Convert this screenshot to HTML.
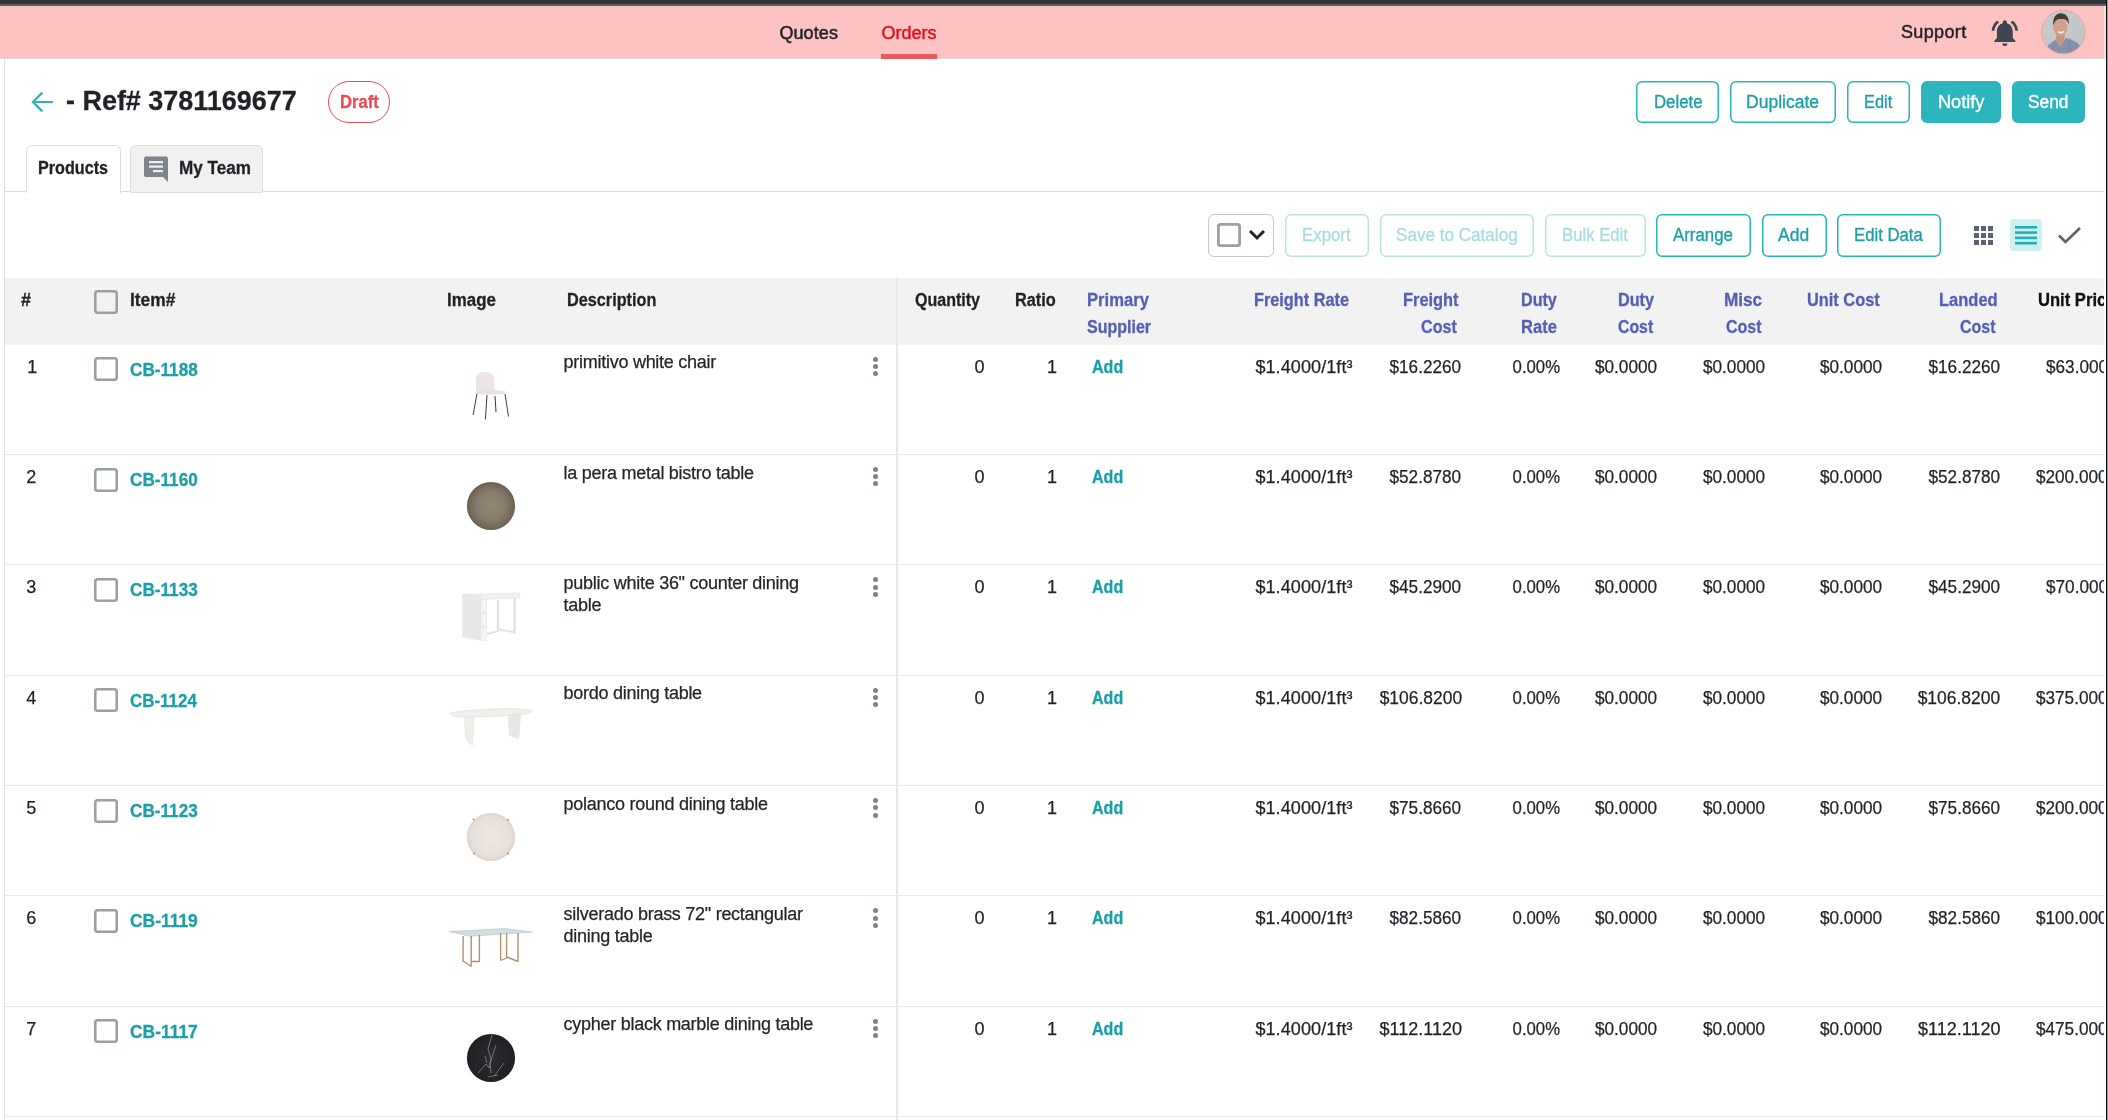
<!DOCTYPE html>
<html><head><meta charset="utf-8"><style>
html,body{margin:0;padding:0;width:2108px;height:1120px;overflow:hidden;background:#fff;}
body{position:relative;font-family:"Liberation Sans", sans-serif;}
#root{position:absolute;left:0;top:0;width:2108px;height:1120px;will-change:transform;background:#fff;}
#root>div{position:absolute;box-sizing:content-box;}
body>div{position:absolute;box-sizing:content-box;}
.t{white-space:nowrap;line-height:normal;-webkit-font-smoothing:antialiased;}
#clip{position:absolute;left:0;top:0;width:2104px;height:1120px;overflow:hidden;}
</style></head><body>
<div id="root">
<div style="left:0px;top:0px;width:2108px;height:4px;background:#333438"></div>
<div style="left:0px;top:4px;width:2108px;height:2px;background:#5c6064"></div>
<div style="left:0px;top:6px;width:2108px;height:52px;background:#fdc3c3"></div>
<div style="left:0px;top:58px;width:2108px;height:1px;background:#dcd8d8"></div>
<div class="t" style="top:23.11px;font-size:18px;font-weight:400;color:#1f2328;left:779.4px;-webkit-text-stroke:0.5px currentColor;letter-spacing:0.1px;">Quotes</div>
<div class="t" style="top:23.11px;font-size:18px;font-weight:400;color:#e0121c;left:881.4px;-webkit-text-stroke:0.45px currentColor;">Orders</div>
<div style="left:881px;top:54px;width:56px;height:5px;background:#e85a5a"></div>
<div class="t" style="top:22.21px;font-size:18px;font-weight:400;color:#1f2328;left:1901px;-webkit-text-stroke:0.5px currentColor;letter-spacing:0.35px;">Support</div>
<svg style="position:absolute;left:1988.6px;top:17px;" width="32" height="32" viewBox="0 0 32 32"><g transform="scale(1.32)"><path fill="#3d4550" d="M7.58 4.08L6.15 2.65C3.75 4.48 2.17 7.3 2.03 10.5h2c.15-2.65 1.51-4.97 3.55-6.42zm12.39 6.42h2c-.15-3.2-1.73-6.02-4.12-7.85l-1.42 1.43c2.02 1.45 3.39 3.770 3.54 6.42zM18 11c0-3.07-1.64-5.640-4.5-6.32V4c0-.83-.67-1.5-1.5-1.5s-1.5.67-1.5 1.5v.68C7.63 5.36 6 7.92 6 11v5l-2 2v1h16v-1l-2-2v-5zm-6 11c.14 0 .27-.01.4-.04.65-.14 1.18-.58 1.44-1.18.1-.24.15-.5.15-.78h-4c.01 1.1.9 2 2.01 2z"/></g></svg>
<svg style="position:absolute;left:2041px;top:9px;" width="46" height="46" viewBox="0 0 46 46"><defs><clipPath id="av"><circle cx="22.5" cy="23.1" r="21.6"/></clipPath>
<linearGradient id="avbg" x1="0" y1="0" x2="1" y2="1"><stop offset="0" stop-color="#c8cccc"/><stop offset="1" stop-color="#bfc4c4"/></linearGradient></defs>
<g clip-path="url(#av)"><rect width="46" height="46" fill="url(#avbg)"/>
<path d="M2 48L6 38C9 34 13 31.5 15 30.5l4.5 7 5-8.5c6 1 12 4 15.5 8.5L44 48z" fill="#8693ab"/>
<path d="M4 44l4-8M10 46l3-12M30 46l-2-15M36 46l-1-12" stroke="#6f7a90" stroke-width=".8" opacity=".6"/>
<path d="M15 24.5h9l-.6 7-3.9 6-4.2-6z" fill="#c99682"/>
<ellipse cx="19.3" cy="18.3" rx="6.9" ry="8.6" fill="#d49f8b"/>
<path d="M12.2 17C11.5 9 14.5 4.2 19.8 4.2s8.6 4 8 11.5c-.8-3.6-3-5.6-7.8-5.6s-6.6 2.3-7.8 6.9z" fill="#4c3b2f"/>
<path d="M17 22.6q2.8 2.4 5.8-.2" stroke="#f2f2f2" stroke-width="1.5" fill="none"/>
</g><circle cx="22.5" cy="23.1" r="21.8" fill="none" stroke="#eaa4a4" stroke-width="1"/></svg>
<div style="left:2104px;top:6px;width:2px;height:52px;background:#ffdada"></div>
<div style="left:2106px;top:0px;width:1px;height:1120px;background:#0c0c0c"></div>
<div style="left:2107px;top:0px;width:1px;height:1120px;background:#7ab070"></div>
<div style="left:4px;top:58px;width:1px;height:1062px;background:#e0e1e3"></div>
<svg style="position:absolute;left:29px;top:89px;" width="27" height="26" viewBox="0 0 27 26"><path d="M13.3 3.6L3.9 13l9.4 9.4M4.4 13H23.9" stroke="#2bb3ba" stroke-width="2.2" fill="none" stroke-linecap="butt"/></svg>
<div class="t" style="top:85.56px;font-size:27px;font-weight:700;color:#1f2328;left:65.90px;-webkit-text-stroke:0.3px currentColor;transform:scaleX(0.9978);transform-origin:left center;">- Ref# 3781169677</div>
<div style="left:328px;top:81px;width:60px;height:40px;border:1px solid #e65055;border-radius:21px"></div>
<div class="t" style="top:91.51px;font-size:18px;font-weight:700;color:#e84c52;left:340.00px;-webkit-text-stroke:0.3px currentColor;transform:scaleX(0.9220);transform-origin:left center;">Draft</div>
<div style="left:1636px;top:81px;width:83px;height:42px;box-shadow:inset 0 0 0 1.5px #2bb3ba;border-radius:6px"></div>
<div class="t" style="top:91.71px;font-size:18px;font-weight:400;color:#1d9fa7;left:1653.90px;-webkit-text-stroke:0.35px currentColor;transform:scaleX(0.9314);transform-origin:left center;">Delete</div>
<div style="left:1730px;top:81px;width:106px;height:42px;box-shadow:inset 0 0 0 1.5px #2bb3ba;border-radius:6px"></div>
<div class="t" style="top:91.71px;font-size:18px;font-weight:400;color:#1d9fa7;left:1746.40px;-webkit-text-stroke:0.35px currentColor;transform:scaleX(0.9730);transform-origin:left center;">Duplicate</div>
<div style="left:1847px;top:81px;width:63px;height:42px;box-shadow:inset 0 0 0 1.5px #2bb3ba;border-radius:6px"></div>
<div class="t" style="top:91.71px;font-size:18px;font-weight:400;color:#1d9fa7;left:1864.20px;-webkit-text-stroke:0.35px currentColor;transform:scaleX(0.9097);transform-origin:left center;">Edit</div>
<div style="left:1921px;top:81px;width:80px;height:42px;background:#2db5bd;border-radius:6px"></div>
<div class="t" style="top:91.71px;font-size:18px;font-weight:400;color:#ffffff;left:1938.00px;-webkit-text-stroke:0.35px currentColor;transform:scaleX(1.0089);transform-origin:left center;">Notify</div>
<div style="left:2012px;top:81px;width:73px;height:42px;background:#2db5bd;border-radius:6px"></div>
<div class="t" style="top:91.71px;font-size:18px;font-weight:400;color:#ffffff;left:2028.10px;-webkit-text-stroke:0.35px currentColor;transform:scaleX(0.9625);transform-origin:left center;">Send</div>
<div style="left:4px;top:191px;width:2100px;height:1px;background:#dcdcdc"></div>
<div style="left:26px;top:145px;width:93px;height:47px;background:#fff;border:1px solid #dedede;border-bottom:none;border-radius:6px 6px 0 0"></div>
<div class="t" style="top:157.91px;font-size:18px;font-weight:700;color:#1f2328;left:37.80px;-webkit-text-stroke:0.3px currentColor;transform:scaleX(0.8974);transform-origin:left center;">Products</div>
<div style="left:130px;top:145px;width:131px;height:46px;background:#f1f1f1;border:1px solid #dedede;border-radius:6px 6px 0 0"></div>
<svg style="position:absolute;left:143px;top:155px;" width="27" height="27" viewBox="0 0 27 27"><path d="M3 1.5h20a2 2 0 0 1 2 2v23.5l-5-5H3a2 2 0 0 1-2-2V3.5a2 2 0 0 1 2-2z" fill="#7d848c"/><rect x="6" y="6" width="14" height="2.2" fill="#f1f1f1"/><rect x="6" y="10.5" width="14" height="2.2" fill="#f1f1f1"/><rect x="10" y="15" width="10" height="2.2" fill="#f1f1f1"/></svg>
<div class="t" style="top:157.91px;font-size:18px;font-weight:700;color:#1f2328;left:179.00px;-webkit-text-stroke:0.3px currentColor;transform:scaleX(0.9514);transform-origin:left center;">My Team</div>
<div style="left:1208px;top:214px;width:64px;height:41px;border:1.5px solid #c8c8cc;border-radius:6px"></div>
<div style="left:1217px;top:223px;width:24px;height:24px;box-shadow:inset 0 0 0 2.8px #9aa0a6;border-radius:3.5px"></div>
<svg style="position:absolute;left:1247px;top:228px;" width="20" height="14" viewBox="0 0 20 14"><path d="M3 3l7 7 7-7" stroke="#222" stroke-width="3" fill="none"/></svg>
<div style="left:1285px;top:214px;width:84px;height:43px;box-shadow:inset 0 0 0 1.5px #b8e4e7;border-radius:6px"></div>
<div class="t" style="top:224.71px;font-size:18px;font-weight:400;color:#a9dde1;left:1302.20px;-webkit-text-stroke:0.35px currentColor;transform:scaleX(0.9346);transform-origin:left center;">Export</div>
<div style="left:1380px;top:214px;width:154px;height:43px;box-shadow:inset 0 0 0 1.5px #b8e4e7;border-radius:6px"></div>
<div class="t" style="top:224.71px;font-size:18px;font-weight:400;color:#a9dde1;left:1396.20px;-webkit-text-stroke:0.35px currentColor;transform:scaleX(0.9500);transform-origin:left center;">Save to Catalog</div>
<div style="left:1545px;top:214px;width:101px;height:43px;box-shadow:inset 0 0 0 1.5px #b8e4e7;border-radius:6px"></div>
<div class="t" style="top:224.71px;font-size:18px;font-weight:400;color:#a9dde1;left:1562.00px;-webkit-text-stroke:0.35px currentColor;transform:scaleX(0.9282);transform-origin:left center;">Bulk Edit</div>
<div style="left:1656px;top:214px;width:95px;height:43px;box-shadow:inset 0 0 0 1.5px #2bb3ba;border-radius:6px"></div>
<div class="t" style="top:224.71px;font-size:18px;font-weight:400;color:#1d9fa7;left:1673.20px;-webkit-text-stroke:0.35px currentColor;transform:scaleX(0.9344);transform-origin:left center;">Arrange</div>
<div style="left:1762px;top:214px;width:65px;height:43px;box-shadow:inset 0 0 0 1.5px #2bb3ba;border-radius:6px"></div>
<div class="t" style="top:224.71px;font-size:18px;font-weight:400;color:#1d9fa7;left:1778.30px;-webkit-text-stroke:0.35px currentColor;transform:scaleX(0.9710);transform-origin:left center;">Add</div>
<div style="left:1837px;top:214px;width:104px;height:43px;box-shadow:inset 0 0 0 1.5px #2bb3ba;border-radius:6px"></div>
<div class="t" style="top:224.71px;font-size:18px;font-weight:400;color:#1d9fa7;left:1853.80px;-webkit-text-stroke:0.35px currentColor;transform:scaleX(0.9284);transform-origin:left center;">Edit Data</div>
<svg style="position:absolute;left:1974px;top:226px;" width="19" height="19" viewBox="0 0 19 19"><rect x="0" y="0" width="5" height="5" fill="#5b6370"/><rect x="7" y="0" width="5" height="5" fill="#5b6370"/><rect x="14" y="0" width="5" height="5" fill="#5b6370"/><rect x="0" y="7" width="5" height="5" fill="#5b6370"/><rect x="7" y="7" width="5" height="5" fill="#5b6370"/><rect x="14" y="7" width="5" height="5" fill="#5b6370"/><rect x="0" y="14" width="5" height="5" fill="#5b6370"/><rect x="7" y="14" width="5" height="5" fill="#5b6370"/><rect x="14" y="14" width="5" height="5" fill="#5b6370"/></svg>
<div style="left:2010px;top:219px;width:32px;height:32px;background:#cdf0f0;border-radius:4px"></div>
<svg style="position:absolute;left:2015px;top:226px;" width="22" height="19" viewBox="0 0 22 19"><rect x="0" y="0.0" width="22" height="2.6" fill="#22aeb5"/><rect x="0" y="5.3" width="22" height="2.6" fill="#22aeb5"/><rect x="0" y="10.6" width="22" height="2.6" fill="#22aeb5"/><rect x="0" y="15.9" width="22" height="2.6" fill="#22aeb5"/></svg>
<svg style="position:absolute;left:2057px;top:226px;" width="25" height="20" viewBox="0 0 25 20"><path d="M2 9.5l6.5 6.5L23 2" stroke="#5b6370" stroke-width="2.6" fill="none"/></svg>
<div style="left:5px;top:278px;width:2099px;height:67px;background:#f2f2f2"></div>
<div style="left:896px;top:278px;width:2px;height:842px;background:#e6e7e8"></div>
<div class="t" style="top:289.71px;font-size:18px;font-weight:700;color:#1f2328;left:21px;-webkit-text-stroke:0.3px currentColor;">#</div>
<div style="left:94px;top:290px;width:24px;height:24px;box-shadow:inset 0 0 0 2.6px #9aa0a6;border-radius:3.5px"></div>
<div class="t" style="top:289.71px;font-size:18px;font-weight:700;color:#1f2328;left:130.00px;-webkit-text-stroke:0.3px currentColor;transform:scaleX(0.9652);transform-origin:left center;">Item#</div>
<div class="t" style="top:289.71px;font-size:18px;font-weight:700;color:#1f2328;left:447.20px;-webkit-text-stroke:0.3px currentColor;transform:scaleX(0.9412);transform-origin:left center;">Image</div>
<div class="t" style="top:289.71px;font-size:18px;font-weight:700;color:#1f2328;left:567.00px;-webkit-text-stroke:0.3px currentColor;transform:scaleX(0.9020);transform-origin:left center;">Description</div>
<div class="t" style="top:289.71px;font-size:18px;font-weight:700;color:#1f2328;left:914.80px;-webkit-text-stroke:0.3px currentColor;transform:scaleX(0.8904);transform-origin:left center;">Quantity</div>
<div class="t" style="top:289.71px;font-size:18px;font-weight:700;color:#1f2328;left:1014.70px;-webkit-text-stroke:0.3px currentColor;transform:scaleX(0.9068);transform-origin:left center;">Ratio</div>
<div class="t" style="top:289.71px;font-size:18px;font-weight:700;color:#5560b3;left:1086.90px;-webkit-text-stroke:0.3px currentColor;transform:scaleX(0.9242);transform-origin:left center;">Primary</div>
<div class="t" style="top:316.71px;font-size:18px;font-weight:700;color:#5560b3;left:1086.90px;-webkit-text-stroke:0.3px currentColor;transform:scaleX(0.8903);transform-origin:left center;">Supplier</div>
<div class="t" style="top:289.71px;font-size:18px;font-weight:700;color:#5560b3;left:1253.80px;-webkit-text-stroke:0.3px currentColor;transform:scaleX(0.9048);transform-origin:left center;">Freight Rate</div>
<div class="t" style="top:289.71px;font-size:18px;font-weight:700;color:#5560b3;left:1402.60px;-webkit-text-stroke:0.3px currentColor;transform:scaleX(0.9100);transform-origin:left center;">Freight</div>
<div class="t" style="top:316.71px;font-size:18px;font-weight:700;color:#5560b3;left:1421.40px;-webkit-text-stroke:0.3px currentColor;transform:scaleX(0.8950);transform-origin:left center;">Cost</div>
<div class="t" style="top:289.71px;font-size:18px;font-weight:700;color:#5560b3;left:1521.00px;-webkit-text-stroke:0.3px currentColor;transform:scaleX(0.8949);transform-origin:left center;">Duty</div>
<div class="t" style="top:316.71px;font-size:18px;font-weight:700;color:#5560b3;left:1521.00px;-webkit-text-stroke:0.3px currentColor;transform:scaleX(0.9184);transform-origin:left center;">Rate</div>
<div class="t" style="top:289.71px;font-size:18px;font-weight:700;color:#5560b3;left:1618.20px;-webkit-text-stroke:0.3px currentColor;transform:scaleX(0.9000);transform-origin:left center;">Duty</div>
<div class="t" style="top:316.71px;font-size:18px;font-weight:700;color:#5560b3;left:1618.20px;-webkit-text-stroke:0.3px currentColor;transform:scaleX(0.8800);transform-origin:left center;">Cost</div>
<div class="t" style="top:289.71px;font-size:18px;font-weight:700;color:#5560b3;left:1724.20px;-webkit-text-stroke:0.3px currentColor;transform:scaleX(0.9538);transform-origin:left center;">Misc</div>
<div class="t" style="top:316.71px;font-size:18px;font-weight:700;color:#5560b3;left:1725.90px;-webkit-text-stroke:0.3px currentColor;transform:scaleX(0.8875);transform-origin:left center;">Cost</div>
<div class="t" style="top:289.71px;font-size:18px;font-weight:700;color:#5560b3;left:1806.90px;-webkit-text-stroke:0.3px currentColor;transform:scaleX(0.9089);transform-origin:left center;">Unit Cost</div>
<div class="t" style="top:289.71px;font-size:18px;font-weight:700;color:#5560b3;left:1938.90px;-webkit-text-stroke:0.3px currentColor;transform:scaleX(0.9161);transform-origin:left center;">Landed</div>
<div class="t" style="top:316.71px;font-size:18px;font-weight:700;color:#5560b3;left:1960.20px;-webkit-text-stroke:0.3px currentColor;transform:scaleX(0.8875);transform-origin:left center;">Cost</div>
<div class="t" style="top:289.71px;font-size:18px;font-weight:700;color:#111;left:2037.90px;-webkit-text-stroke:0.3px currentColor;transform:scaleX(0.9217);transform-origin:left center;">Unit Price</div>
<div style="left:5px;top:454px;width:2099px;height:1px;background:#e9eaeb"></div>
<div class="t" style="top:356.51px;font-size:18px;font-weight:400;color:#1f2328;left:27.2px;-webkit-text-stroke:0.25px currentColor;">1</div>
<div style="left:94px;top:357px;width:24px;height:24px;box-shadow:inset 0 0 0 2.6px #9aa0a6;border-radius:3.5px"></div>
<div class="t" style="top:359.71px;font-size:18px;font-weight:700;color:#1d9fa7;left:130.00px;-webkit-text-stroke:0.3px currentColor;transform:scaleX(0.9535);transform-origin:left center;">CB-1188</div>
<div class="t" style="top:352.31px;font-size:18px;font-weight:400;color:#23272b;letter-spacing:-0.27px;left:563.6px;-webkit-text-stroke:0.25px currentColor;">primitivo white chair</div>
<div style="left:873px;top:356.7px;width:5px;height:5px;background:#7c838d;border-radius:50%"></div>
<div style="left:873px;top:363.9px;width:5px;height:5px;background:#7c838d;border-radius:50%"></div>
<div style="left:873px;top:371.1px;width:5px;height:5px;background:#7c838d;border-radius:50%"></div>
<div class="t" style="top:356.51px;font-size:18px;font-weight:400;color:#1f2328;right:1123.5px;text-align:right;-webkit-text-stroke:0.25px currentColor;">0</div>
<div class="t" style="top:356.51px;font-size:18px;font-weight:400;color:#1f2328;right:1051px;text-align:right;-webkit-text-stroke:0.25px currentColor;">1</div>
<div class="t" style="top:356.51px;font-size:18px;font-weight:700;color:#1d9fa7;left:1092.20px;-webkit-text-stroke:0.3px currentColor;transform:scaleX(0.8912);transform-origin:left center;">Add</div>
<div class="t" style="top:356.51px;font-size:18px;font-weight:400;color:#1f2328;letter-spacing:0.1px;left:1255.4px;-webkit-text-stroke:0.25px currentColor;">$1.4000/1ft³</div>
<div class="t" style="top:356.51px;font-size:18px;font-weight:400;color:#1f2328;right:646.5px;text-align:right;-webkit-text-stroke:0.25px currentColor;transform:scaleX(0.9533);transform-origin:right center;">$16.2260</div>
<div class="t" style="top:356.51px;font-size:18px;font-weight:400;color:#1f2328;right:548.4000000000001px;text-align:right;-webkit-text-stroke:0.25px currentColor;transform:scaleX(0.9294);transform-origin:right center;">0.00%</div>
<div class="t" style="top:356.51px;font-size:18px;font-weight:400;color:#1f2328;right:451.0px;text-align:right;-webkit-text-stroke:0.25px currentColor;transform:scaleX(0.9538);transform-origin:right center;">$0.0000</div>
<div class="t" style="top:356.51px;font-size:18px;font-weight:400;color:#1f2328;right:343.0px;text-align:right;-webkit-text-stroke:0.25px currentColor;transform:scaleX(0.9538);transform-origin:right center;">$0.0000</div>
<div class="t" style="top:356.51px;font-size:18px;font-weight:400;color:#1f2328;right:226.0px;text-align:right;-webkit-text-stroke:0.25px currentColor;transform:scaleX(0.9538);transform-origin:right center;">$0.0000</div>
<div class="t" style="top:356.51px;font-size:18px;font-weight:400;color:#1f2328;right:108.0px;text-align:right;-webkit-text-stroke:0.25px currentColor;transform:scaleX(0.9533);transform-origin:right center;">$16.2260</div>
<div class="t" style="top:356.51px;font-size:18px;font-weight:400;color:#1f2328;left:2046px;-webkit-text-stroke:0.25px currentColor;transform:scaleX(0.9533);transform-origin:left center;">$63.0000</div>
<svg style="position:absolute;left:468px;top:368px;" width="44" height="56" viewBox="0 0 44 56"><path d="M7.9 25.5V12.5C7.9 6 11.5 3.9 17 3.9s9.4 2.1 9.4 8.6V25z" fill="#ebe5e5"/>
<path d="M8 22.5c6-.8 14-.8 21-.3 4 .3 8 .6 8 1.3 0 1.5-1.5 2.6-3 2.8-8 .6-18 .4-26-.3z" fill="#e8e3e1"/>
<path d="M8.9 26L5.1 47M19 27l-1.6 24.4M27 28l1 16M37 26l3.5 22.5" stroke="#3a3a3a" stroke-width="1" fill="none"/></svg>
<div style="left:5px;top:564px;width:2099px;height:1px;background:#e9eaeb"></div>
<div class="t" style="top:466.86px;font-size:18px;font-weight:400;color:#1f2328;left:26.3px;-webkit-text-stroke:0.25px currentColor;">2</div>
<div style="left:94px;top:468px;width:24px;height:24px;box-shadow:inset 0 0 0 2.6px #9aa0a6;border-radius:3.5px"></div>
<div class="t" style="top:470.06px;font-size:18px;font-weight:700;color:#1d9fa7;left:130.00px;-webkit-text-stroke:0.3px currentColor;transform:scaleX(0.9535);transform-origin:left center;">CB-1160</div>
<div class="t" style="top:462.66px;font-size:18px;font-weight:400;color:#23272b;letter-spacing:-0.27px;left:563.6px;-webkit-text-stroke:0.25px currentColor;">la pera metal bistro table</div>
<div style="left:873px;top:467.05px;width:5px;height:5px;background:#7c838d;border-radius:50%"></div>
<div style="left:873px;top:474.25px;width:5px;height:5px;background:#7c838d;border-radius:50%"></div>
<div style="left:873px;top:481.45000000000005px;width:5px;height:5px;background:#7c838d;border-radius:50%"></div>
<div class="t" style="top:466.86px;font-size:18px;font-weight:400;color:#1f2328;right:1123.5px;text-align:right;-webkit-text-stroke:0.25px currentColor;">0</div>
<div class="t" style="top:466.86px;font-size:18px;font-weight:400;color:#1f2328;right:1051px;text-align:right;-webkit-text-stroke:0.25px currentColor;">1</div>
<div class="t" style="top:466.86px;font-size:18px;font-weight:700;color:#1d9fa7;left:1092.20px;-webkit-text-stroke:0.3px currentColor;transform:scaleX(0.8912);transform-origin:left center;">Add</div>
<div class="t" style="top:466.86px;font-size:18px;font-weight:400;color:#1f2328;letter-spacing:0.1px;left:1255.4px;-webkit-text-stroke:0.25px currentColor;">$1.4000/1ft³</div>
<div class="t" style="top:466.86px;font-size:18px;font-weight:400;color:#1f2328;right:646.5px;text-align:right;-webkit-text-stroke:0.25px currentColor;transform:scaleX(0.9533);transform-origin:right center;">$52.8780</div>
<div class="t" style="top:466.86px;font-size:18px;font-weight:400;color:#1f2328;right:548.4000000000001px;text-align:right;-webkit-text-stroke:0.25px currentColor;transform:scaleX(0.9294);transform-origin:right center;">0.00%</div>
<div class="t" style="top:466.86px;font-size:18px;font-weight:400;color:#1f2328;right:451.0px;text-align:right;-webkit-text-stroke:0.25px currentColor;transform:scaleX(0.9538);transform-origin:right center;">$0.0000</div>
<div class="t" style="top:466.86px;font-size:18px;font-weight:400;color:#1f2328;right:343.0px;text-align:right;-webkit-text-stroke:0.25px currentColor;transform:scaleX(0.9538);transform-origin:right center;">$0.0000</div>
<div class="t" style="top:466.86px;font-size:18px;font-weight:400;color:#1f2328;right:226.0px;text-align:right;-webkit-text-stroke:0.25px currentColor;transform:scaleX(0.9538);transform-origin:right center;">$0.0000</div>
<div class="t" style="top:466.86px;font-size:18px;font-weight:400;color:#1f2328;right:108.0px;text-align:right;-webkit-text-stroke:0.25px currentColor;transform:scaleX(0.9533);transform-origin:right center;">$52.8780</div>
<div class="t" style="top:466.86px;font-size:18px;font-weight:400;color:#1f2328;left:2035.5px;-webkit-text-stroke:0.25px currentColor;transform:scaleX(0.9529);transform-origin:left center;">$200.0000</div>
<svg style="position:absolute;left:466px;top:481px;" width="50" height="50" viewBox="0 0 50 50"><defs><radialGradient id="brz" cx=".5" cy=".5" r=".5"><stop offset="0" stop-color="#938877"/><stop offset=".6" stop-color="#877b6b"/><stop offset="1" stop-color="#6a6051"/></radialGradient></defs><circle cx="25" cy="25" r="24.1" fill="url(#brz)"/></svg>
<div style="left:5px;top:675px;width:2099px;height:1px;background:#e9eaeb"></div>
<div class="t" style="top:577.21px;font-size:18px;font-weight:400;color:#1f2328;left:26.3px;-webkit-text-stroke:0.25px currentColor;">3</div>
<div style="left:94px;top:578px;width:24px;height:24px;box-shadow:inset 0 0 0 2.6px #9aa0a6;border-radius:3.5px"></div>
<div class="t" style="top:580.41px;font-size:18px;font-weight:700;color:#1d9fa7;left:130.00px;-webkit-text-stroke:0.3px currentColor;transform:scaleX(0.9535);transform-origin:left center;">CB-1133</div>
<div class="t" style="top:573.01px;font-size:18px;font-weight:400;color:#23272b;letter-spacing:-0.27px;left:563.6px;-webkit-text-stroke:0.25px currentColor;">public white 36" counter dining</div>
<div class="t" style="top:594.81px;font-size:18px;font-weight:400;color:#23272b;letter-spacing:-0.27px;left:563.6px;-webkit-text-stroke:0.25px currentColor;">table</div>
<div style="left:873px;top:577.4000000000001px;width:5px;height:5px;background:#7c838d;border-radius:50%"></div>
<div style="left:873px;top:584.6px;width:5px;height:5px;background:#7c838d;border-radius:50%"></div>
<div style="left:873px;top:591.8000000000001px;width:5px;height:5px;background:#7c838d;border-radius:50%"></div>
<div class="t" style="top:577.21px;font-size:18px;font-weight:400;color:#1f2328;right:1123.5px;text-align:right;-webkit-text-stroke:0.25px currentColor;">0</div>
<div class="t" style="top:577.21px;font-size:18px;font-weight:400;color:#1f2328;right:1051px;text-align:right;-webkit-text-stroke:0.25px currentColor;">1</div>
<div class="t" style="top:577.21px;font-size:18px;font-weight:700;color:#1d9fa7;left:1092.20px;-webkit-text-stroke:0.3px currentColor;transform:scaleX(0.8912);transform-origin:left center;">Add</div>
<div class="t" style="top:577.21px;font-size:18px;font-weight:400;color:#1f2328;letter-spacing:0.1px;left:1255.4px;-webkit-text-stroke:0.25px currentColor;">$1.4000/1ft³</div>
<div class="t" style="top:577.21px;font-size:18px;font-weight:400;color:#1f2328;right:646.5px;text-align:right;-webkit-text-stroke:0.25px currentColor;transform:scaleX(0.9533);transform-origin:right center;">$45.2900</div>
<div class="t" style="top:577.21px;font-size:18px;font-weight:400;color:#1f2328;right:548.4000000000001px;text-align:right;-webkit-text-stroke:0.25px currentColor;transform:scaleX(0.9294);transform-origin:right center;">0.00%</div>
<div class="t" style="top:577.21px;font-size:18px;font-weight:400;color:#1f2328;right:451.0px;text-align:right;-webkit-text-stroke:0.25px currentColor;transform:scaleX(0.9538);transform-origin:right center;">$0.0000</div>
<div class="t" style="top:577.21px;font-size:18px;font-weight:400;color:#1f2328;right:343.0px;text-align:right;-webkit-text-stroke:0.25px currentColor;transform:scaleX(0.9538);transform-origin:right center;">$0.0000</div>
<div class="t" style="top:577.21px;font-size:18px;font-weight:400;color:#1f2328;right:226.0px;text-align:right;-webkit-text-stroke:0.25px currentColor;transform:scaleX(0.9538);transform-origin:right center;">$0.0000</div>
<div class="t" style="top:577.21px;font-size:18px;font-weight:400;color:#1f2328;right:108.0px;text-align:right;-webkit-text-stroke:0.25px currentColor;transform:scaleX(0.9533);transform-origin:right center;">$45.2900</div>
<div class="t" style="top:577.21px;font-size:18px;font-weight:400;color:#1f2328;left:2046px;-webkit-text-stroke:0.25px currentColor;transform:scaleX(0.9533);transform-origin:left center;">$70.0000</div>
<svg style="position:absolute;left:460px;top:590px;" width="64" height="54" viewBox="0 0 64 54"><path d="M2.2 4.4L21.2 5v45.7L2.2 47.2z" fill="#e8e8e8"/>
<path d="M2.2 4.4L59.8 3v4.9L21.2 9.5V5z" fill="#f1f1f1" stroke="#e2e2e2" stroke-width=".6"/>
<rect x="21.2" y="9.5" width="5.6" height="41.2" fill="#f4f4f4" stroke="#e4e4e4" stroke-width=".5"/>
<path d="M21.2 22.9h5.6M21.2 36.8h5.6" stroke="#e0e0e0" stroke-width="1"/>
<rect x="36.8" y="10" width="2.4" height="29.5" fill="#e2e2e2"/><rect x="53.4" y="8" width="2.4" height="35.5" fill="#e2e2e2"/>
<path d="M26.8 44.3L39.2 40.6M39.2 39.5L55.8 42.5" stroke="#e2e2e2" stroke-width="2" fill="none"/></svg>
<div style="left:5px;top:785px;width:2099px;height:1px;background:#e9eaeb"></div>
<div class="t" style="top:687.56px;font-size:18px;font-weight:400;color:#1f2328;left:26.3px;-webkit-text-stroke:0.25px currentColor;">4</div>
<div style="left:94px;top:688px;width:24px;height:24px;box-shadow:inset 0 0 0 2.6px #9aa0a6;border-radius:3.5px"></div>
<div class="t" style="top:690.76px;font-size:18px;font-weight:700;color:#1d9fa7;left:130.00px;-webkit-text-stroke:0.3px currentColor;transform:scaleX(0.9403);transform-origin:left center;">CB-1124</div>
<div class="t" style="top:683.36px;font-size:18px;font-weight:400;color:#23272b;letter-spacing:-0.27px;left:563.6px;-webkit-text-stroke:0.25px currentColor;">bordo dining table</div>
<div style="left:873px;top:687.75px;width:5px;height:5px;background:#7c838d;border-radius:50%"></div>
<div style="left:873px;top:694.9499999999999px;width:5px;height:5px;background:#7c838d;border-radius:50%"></div>
<div style="left:873px;top:702.15px;width:5px;height:5px;background:#7c838d;border-radius:50%"></div>
<div class="t" style="top:687.56px;font-size:18px;font-weight:400;color:#1f2328;right:1123.5px;text-align:right;-webkit-text-stroke:0.25px currentColor;">0</div>
<div class="t" style="top:687.56px;font-size:18px;font-weight:400;color:#1f2328;right:1051px;text-align:right;-webkit-text-stroke:0.25px currentColor;">1</div>
<div class="t" style="top:687.56px;font-size:18px;font-weight:700;color:#1d9fa7;left:1092.20px;-webkit-text-stroke:0.3px currentColor;transform:scaleX(0.8912);transform-origin:left center;">Add</div>
<div class="t" style="top:687.56px;font-size:18px;font-weight:400;color:#1f2328;letter-spacing:0.1px;left:1255.4px;-webkit-text-stroke:0.25px currentColor;">$1.4000/1ft³</div>
<div class="t" style="top:687.56px;font-size:18px;font-weight:400;color:#1f2328;right:646.3299999999999px;text-align:right;-webkit-text-stroke:0.25px currentColor;transform:scaleX(0.9689);transform-origin:right center;">$106.8200</div>
<div class="t" style="top:687.56px;font-size:18px;font-weight:400;color:#1f2328;right:548.4000000000001px;text-align:right;-webkit-text-stroke:0.25px currentColor;transform:scaleX(0.9294);transform-origin:right center;">0.00%</div>
<div class="t" style="top:687.56px;font-size:18px;font-weight:400;color:#1f2328;right:451.0px;text-align:right;-webkit-text-stroke:0.25px currentColor;transform:scaleX(0.9538);transform-origin:right center;">$0.0000</div>
<div class="t" style="top:687.56px;font-size:18px;font-weight:400;color:#1f2328;right:343.0px;text-align:right;-webkit-text-stroke:0.25px currentColor;transform:scaleX(0.9538);transform-origin:right center;">$0.0000</div>
<div class="t" style="top:687.56px;font-size:18px;font-weight:400;color:#1f2328;right:226.0px;text-align:right;-webkit-text-stroke:0.25px currentColor;transform:scaleX(0.9538);transform-origin:right center;">$0.0000</div>
<div class="t" style="top:687.56px;font-size:18px;font-weight:400;color:#1f2328;right:107.82999999999993px;text-align:right;-webkit-text-stroke:0.25px currentColor;transform:scaleX(0.9689);transform-origin:right center;">$106.8200</div>
<div class="t" style="top:687.56px;font-size:18px;font-weight:400;color:#1f2328;left:2035.5px;-webkit-text-stroke:0.25px currentColor;transform:scaleX(0.9529);transform-origin:left center;">$375.0000</div>
<svg style="position:absolute;left:448px;top:706px;" width="88" height="42" viewBox="0 0 88 42"><path d="M2 7C12 4.5 40 3 62 2.5c10 0 22 1 22.2 2.5-.2 2-6 3-14 4C50 10.5 25 11.2 12 11 6 10.8 2 9 2 7z" fill="#efefec" stroke="#e0e0dc" stroke-width=".7"/>
<path d="M16.4 11.2h9.4l-1.3 27.8-3.1-1.6-3.8-4.65z" fill="#ededea" stroke="#e2e2de" stroke-width=".6"/><path d="M60.1 9l12.5-.6-1.9 24.35-9.3-3.15z" fill="#e8e8e4" stroke="#e0e0dc" stroke-width=".6"/></svg>
<div style="left:5px;top:895px;width:2099px;height:1px;background:#e9eaeb"></div>
<div class="t" style="top:797.91px;font-size:18px;font-weight:400;color:#1f2328;left:26.3px;-webkit-text-stroke:0.25px currentColor;">5</div>
<div style="left:94px;top:799px;width:24px;height:24px;box-shadow:inset 0 0 0 2.6px #9aa0a6;border-radius:3.5px"></div>
<div class="t" style="top:801.11px;font-size:18px;font-weight:700;color:#1d9fa7;left:130.00px;-webkit-text-stroke:0.3px currentColor;transform:scaleX(0.9535);transform-origin:left center;">CB-1123</div>
<div class="t" style="top:793.71px;font-size:18px;font-weight:400;color:#23272b;letter-spacing:-0.27px;left:563.6px;-webkit-text-stroke:0.25px currentColor;">polanco round dining table</div>
<div style="left:873px;top:798.1px;width:5px;height:5px;background:#7c838d;border-radius:50%"></div>
<div style="left:873px;top:805.3px;width:5px;height:5px;background:#7c838d;border-radius:50%"></div>
<div style="left:873px;top:812.5px;width:5px;height:5px;background:#7c838d;border-radius:50%"></div>
<div class="t" style="top:797.91px;font-size:18px;font-weight:400;color:#1f2328;right:1123.5px;text-align:right;-webkit-text-stroke:0.25px currentColor;">0</div>
<div class="t" style="top:797.91px;font-size:18px;font-weight:400;color:#1f2328;right:1051px;text-align:right;-webkit-text-stroke:0.25px currentColor;">1</div>
<div class="t" style="top:797.91px;font-size:18px;font-weight:700;color:#1d9fa7;left:1092.20px;-webkit-text-stroke:0.3px currentColor;transform:scaleX(0.8912);transform-origin:left center;">Add</div>
<div class="t" style="top:797.91px;font-size:18px;font-weight:400;color:#1f2328;letter-spacing:0.1px;left:1255.4px;-webkit-text-stroke:0.25px currentColor;">$1.4000/1ft³</div>
<div class="t" style="top:797.91px;font-size:18px;font-weight:400;color:#1f2328;right:646.5px;text-align:right;-webkit-text-stroke:0.25px currentColor;transform:scaleX(0.9533);transform-origin:right center;">$75.8660</div>
<div class="t" style="top:797.91px;font-size:18px;font-weight:400;color:#1f2328;right:548.4000000000001px;text-align:right;-webkit-text-stroke:0.25px currentColor;transform:scaleX(0.9294);transform-origin:right center;">0.00%</div>
<div class="t" style="top:797.91px;font-size:18px;font-weight:400;color:#1f2328;right:451.0px;text-align:right;-webkit-text-stroke:0.25px currentColor;transform:scaleX(0.9538);transform-origin:right center;">$0.0000</div>
<div class="t" style="top:797.91px;font-size:18px;font-weight:400;color:#1f2328;right:343.0px;text-align:right;-webkit-text-stroke:0.25px currentColor;transform:scaleX(0.9538);transform-origin:right center;">$0.0000</div>
<div class="t" style="top:797.91px;font-size:18px;font-weight:400;color:#1f2328;right:226.0px;text-align:right;-webkit-text-stroke:0.25px currentColor;transform:scaleX(0.9538);transform-origin:right center;">$0.0000</div>
<div class="t" style="top:797.91px;font-size:18px;font-weight:400;color:#1f2328;right:108.0px;text-align:right;-webkit-text-stroke:0.25px currentColor;transform:scaleX(0.9533);transform-origin:right center;">$75.8660</div>
<div class="t" style="top:797.91px;font-size:18px;font-weight:400;color:#1f2328;left:2035.5px;-webkit-text-stroke:0.25px currentColor;transform:scaleX(0.9529);transform-origin:left center;">$200.0000</div>
<svg style="position:absolute;left:466px;top:812px;" width="50" height="50" viewBox="0 0 50 50"><defs><radialGradient id="pol" cx=".5" cy=".5" r=".5"><stop offset="0" stop-color="#eee8e3"/><stop offset=".8" stop-color="#e8e1db"/><stop offset="1" stop-color="#ddd4cc"/></radialGradient></defs><circle cx="25" cy="25" r="24.1" fill="url(#pol)"/>
<circle cx="7.5" cy="7.5" r="1" fill="#b39060"/><circle cx="42" cy="7.7" r="1" fill="#b39060"/><circle cx="8" cy="41.5" r="1" fill="#b39060"/><circle cx="42" cy="41.5" r="1" fill="#b39060"/></svg>
<div style="left:5px;top:1006px;width:2099px;height:1px;background:#e9eaeb"></div>
<div class="t" style="top:908.26px;font-size:18px;font-weight:400;color:#1f2328;left:26.3px;-webkit-text-stroke:0.25px currentColor;">6</div>
<div style="left:94px;top:909px;width:24px;height:24px;box-shadow:inset 0 0 0 2.6px #9aa0a6;border-radius:3.5px"></div>
<div class="t" style="top:911.46px;font-size:18px;font-weight:700;color:#1d9fa7;left:130.00px;-webkit-text-stroke:0.3px currentColor;transform:scaleX(0.9671);transform-origin:left center;">CB-1119</div>
<div class="t" style="top:904.06px;font-size:18px;font-weight:400;color:#23272b;letter-spacing:-0.27px;left:563.6px;-webkit-text-stroke:0.25px currentColor;">silverado brass 72" rectangular</div>
<div class="t" style="top:925.86px;font-size:18px;font-weight:400;color:#23272b;letter-spacing:-0.27px;left:563.6px;-webkit-text-stroke:0.25px currentColor;">dining table</div>
<div style="left:873px;top:908.45px;width:5px;height:5px;background:#7c838d;border-radius:50%"></div>
<div style="left:873px;top:915.65px;width:5px;height:5px;background:#7c838d;border-radius:50%"></div>
<div style="left:873px;top:922.85px;width:5px;height:5px;background:#7c838d;border-radius:50%"></div>
<div class="t" style="top:908.26px;font-size:18px;font-weight:400;color:#1f2328;right:1123.5px;text-align:right;-webkit-text-stroke:0.25px currentColor;">0</div>
<div class="t" style="top:908.26px;font-size:18px;font-weight:400;color:#1f2328;right:1051px;text-align:right;-webkit-text-stroke:0.25px currentColor;">1</div>
<div class="t" style="top:908.26px;font-size:18px;font-weight:700;color:#1d9fa7;left:1092.20px;-webkit-text-stroke:0.3px currentColor;transform:scaleX(0.8912);transform-origin:left center;">Add</div>
<div class="t" style="top:908.26px;font-size:18px;font-weight:400;color:#1f2328;letter-spacing:0.1px;left:1255.4px;-webkit-text-stroke:0.25px currentColor;">$1.4000/1ft³</div>
<div class="t" style="top:908.26px;font-size:18px;font-weight:400;color:#1f2328;right:646.5px;text-align:right;-webkit-text-stroke:0.25px currentColor;transform:scaleX(0.9533);transform-origin:right center;">$82.5860</div>
<div class="t" style="top:908.26px;font-size:18px;font-weight:400;color:#1f2328;right:548.4000000000001px;text-align:right;-webkit-text-stroke:0.25px currentColor;transform:scaleX(0.9294);transform-origin:right center;">0.00%</div>
<div class="t" style="top:908.26px;font-size:18px;font-weight:400;color:#1f2328;right:451.0px;text-align:right;-webkit-text-stroke:0.25px currentColor;transform:scaleX(0.9538);transform-origin:right center;">$0.0000</div>
<div class="t" style="top:908.26px;font-size:18px;font-weight:400;color:#1f2328;right:343.0px;text-align:right;-webkit-text-stroke:0.25px currentColor;transform:scaleX(0.9538);transform-origin:right center;">$0.0000</div>
<div class="t" style="top:908.26px;font-size:18px;font-weight:400;color:#1f2328;right:226.0px;text-align:right;-webkit-text-stroke:0.25px currentColor;transform:scaleX(0.9538);transform-origin:right center;">$0.0000</div>
<div class="t" style="top:908.26px;font-size:18px;font-weight:400;color:#1f2328;right:108.0px;text-align:right;-webkit-text-stroke:0.25px currentColor;transform:scaleX(0.9533);transform-origin:right center;">$82.5860</div>
<div class="t" style="top:908.26px;font-size:18px;font-weight:400;color:#1f2328;left:2035.5px;-webkit-text-stroke:0.25px currentColor;transform:scaleX(0.9529);transform-origin:left center;">$100.0000</div>
<svg style="position:absolute;left:447px;top:926px;" width="90" height="44" viewBox="0 0 90 44"><path d="M2 5.5L58 2.5l27.5 3.5L23 10.3z" fill="#d3dfdf" stroke="#b4c3c3" stroke-width=".6"/>
<path d="M16.1 10v26M24.25 10v30.5M32.4 9v27M16.1 35l8.15 5.5M24.25 35.5h8.15M53.6 7v27.5M59.6 7v24.5M71 7v28.5M53.6 34.5l6-2.5M59.6 31l11.4 4.5" stroke="#b08e6a" stroke-width="1.35" fill="none"/></svg>
<div style="left:5px;top:1116px;width:2099px;height:1px;background:#e9eaeb"></div>
<div class="t" style="top:1018.61px;font-size:18px;font-weight:400;color:#1f2328;left:26.3px;-webkit-text-stroke:0.25px currentColor;">7</div>
<div style="left:94px;top:1019px;width:24px;height:24px;box-shadow:inset 0 0 0 2.6px #9aa0a6;border-radius:3.5px"></div>
<div class="t" style="top:1021.81px;font-size:18px;font-weight:700;color:#1d9fa7;left:130.00px;-webkit-text-stroke:0.3px currentColor;transform:scaleX(0.9671);transform-origin:left center;">CB-1117</div>
<div class="t" style="top:1014.41px;font-size:18px;font-weight:400;color:#23272b;letter-spacing:-0.27px;left:563.6px;-webkit-text-stroke:0.25px currentColor;">cypher black marble dining table</div>
<div style="left:873px;top:1018.8px;width:5px;height:5px;background:#7c838d;border-radius:50%"></div>
<div style="left:873px;top:1026.0px;width:5px;height:5px;background:#7c838d;border-radius:50%"></div>
<div style="left:873px;top:1033.1999999999998px;width:5px;height:5px;background:#7c838d;border-radius:50%"></div>
<div class="t" style="top:1018.61px;font-size:18px;font-weight:400;color:#1f2328;right:1123.5px;text-align:right;-webkit-text-stroke:0.25px currentColor;">0</div>
<div class="t" style="top:1018.61px;font-size:18px;font-weight:400;color:#1f2328;right:1051px;text-align:right;-webkit-text-stroke:0.25px currentColor;">1</div>
<div class="t" style="top:1018.61px;font-size:18px;font-weight:700;color:#1d9fa7;left:1092.20px;-webkit-text-stroke:0.3px currentColor;transform:scaleX(0.8912);transform-origin:left center;">Add</div>
<div class="t" style="top:1018.61px;font-size:18px;font-weight:400;color:#1f2328;letter-spacing:0.1px;left:1255.4px;-webkit-text-stroke:0.25px currentColor;">$1.4000/1ft³</div>
<div class="t" style="top:1018.61px;font-size:18px;font-weight:400;color:#1f2328;right:646px;text-align:right;-webkit-text-stroke:0.25px currentColor;">$112.1120</div>
<div class="t" style="top:1018.61px;font-size:18px;font-weight:400;color:#1f2328;right:548.4000000000001px;text-align:right;-webkit-text-stroke:0.25px currentColor;transform:scaleX(0.9294);transform-origin:right center;">0.00%</div>
<div class="t" style="top:1018.61px;font-size:18px;font-weight:400;color:#1f2328;right:451.0px;text-align:right;-webkit-text-stroke:0.25px currentColor;transform:scaleX(0.9538);transform-origin:right center;">$0.0000</div>
<div class="t" style="top:1018.61px;font-size:18px;font-weight:400;color:#1f2328;right:343.0px;text-align:right;-webkit-text-stroke:0.25px currentColor;transform:scaleX(0.9538);transform-origin:right center;">$0.0000</div>
<div class="t" style="top:1018.61px;font-size:18px;font-weight:400;color:#1f2328;right:226.0px;text-align:right;-webkit-text-stroke:0.25px currentColor;transform:scaleX(0.9538);transform-origin:right center;">$0.0000</div>
<div class="t" style="top:1018.61px;font-size:18px;font-weight:400;color:#1f2328;right:107.5px;text-align:right;-webkit-text-stroke:0.25px currentColor;">$112.1120</div>
<div class="t" style="top:1018.61px;font-size:18px;font-weight:400;color:#1f2328;left:2035.5px;-webkit-text-stroke:0.25px currentColor;transform:scaleX(0.9529);transform-origin:left center;">$475.0000</div>
<svg style="position:absolute;left:466px;top:1033px;" width="50" height="50" viewBox="0 0 50 50"><defs><radialGradient id="mar" cx=".5" cy=".5" r=".5"><stop offset="0" stop-color="#2a2c30"/><stop offset="1" stop-color="#1f2124"/></radialGradient></defs><circle cx="25" cy="25" r="24.1" fill="url(#mar)"/>
<path d="M26 2l-4 14 3 10-2 9M12 40l8-9 3 4M19 23l2 7M30 12l-6 18 1 10M38 30l-10 13M22 44l10-2" stroke="#8f9296" stroke-width=".7" fill="none"/></svg>
<div style="left:2104px;top:59px;width:2px;height:1061px;background:#ffffff"></div>
<div style="left:2106px;top:0px;width:1px;height:1120px;background:#0c0c0c"></div>
<div style="left:2107px;top:0px;width:1px;height:1120px;background:#7ab070"></div>
</div>
</body></html>
